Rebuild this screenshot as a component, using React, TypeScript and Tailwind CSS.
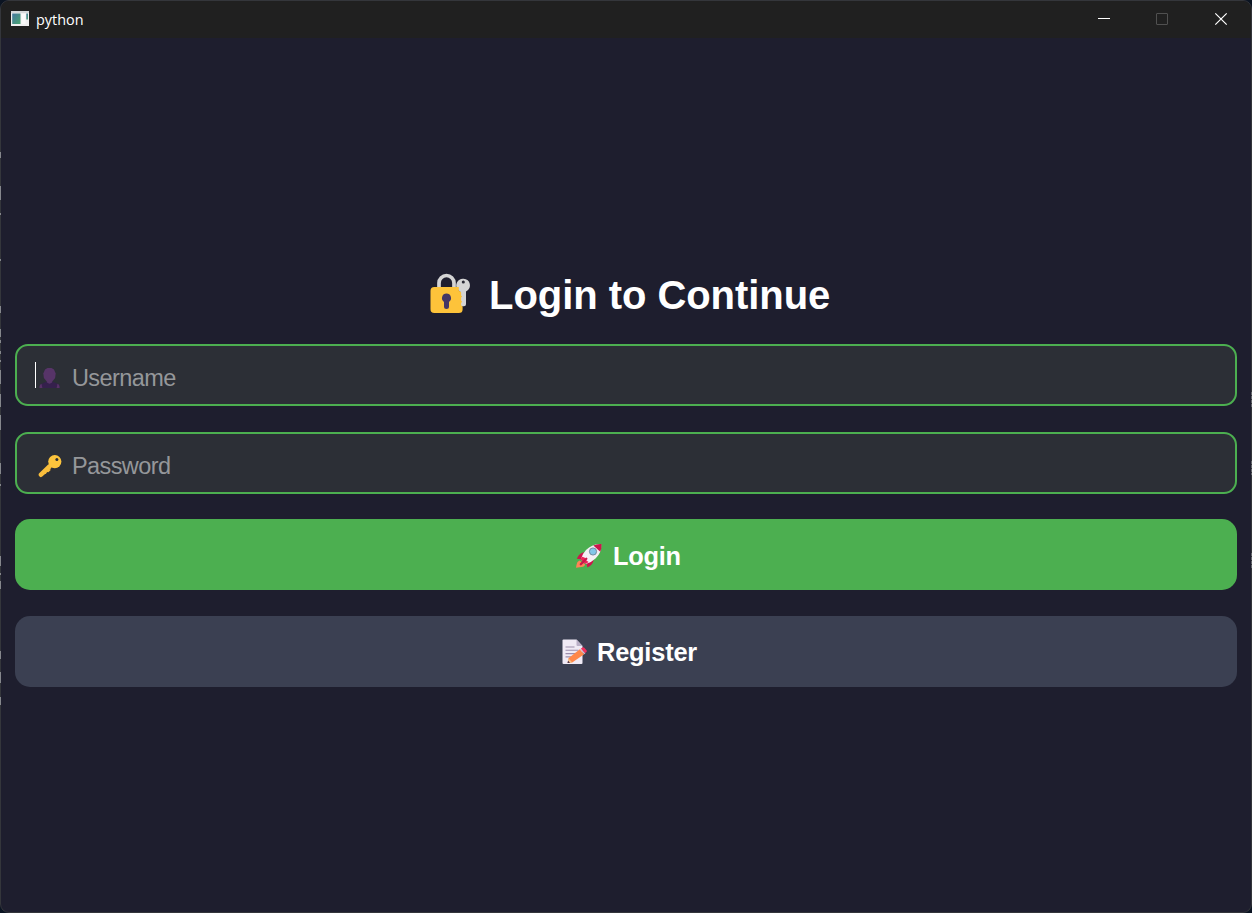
import React from "react";

function AppIcon() {
  return (
    <svg className="block h-[15px] w-[18px]" viewBox="0 0 18 15">
      <defs>
        <linearGradient id="pane" x1="0" y1="0" x2="1" y2="1">
          <stop offset="0" stopColor="#4577a0" />
          <stop offset="1" stopColor="#4ba671" />
        </linearGradient>
      </defs>
      <rect width="18" height="15" fill="#f0f0f0" />
      <rect width="18" height="2" fill="#d5d8da" />
      <rect x="1.200" y="2.500" width="8.300" height="10.500" fill="url(#pane)" />
      <rect x="10.500" y="3" width="4" height="10" fill="#fafafa" />
      <rect x="15.300" y="2.500" width="1.700" height="6" fill="url(#pane)" />
    </svg>
  );
}

function LockIcon() {
  return (
    <svg className="block h-[42px] w-[42px]" viewBox="0 0 42 42">
      <path d="M9 15V10a7.500 7.500 0 0 1 15 0V15" fill="none" stroke="#d4d4d4" strokeWidth="3.700" />
      <path d="M33.500 5.700a6.700 6.700 0 0 0-5.800 10.800q1.300 1.500 2.500 2V32q0 1.300 1.500 1.300H34q2 0 2-2V18.500A6.700 6.700 0 0 0 33.500 5.700Z" fill="#d5d5d5" />
      <path d="M4.300 14h24.500v3.500l2.300 1.800v3.200l1 1-1 1v3l1 1.200-1 1.200v2.300l1.500 1.200v3.200q0 3.500-3.800 3.500H4.300q-3.800 0-3.800-3.800V17.800Q.5 14 4.300 14Z" fill="#fdc33a" />
      <circle cx="33.300" cy="9" r="1.550" fill="#2b2b36" />
      <path d="M16.500 20.500a4.600 4.600 0 0 0-2.500 8.400v4.500a2.500 2.500 0 0 0 5 0v-4.500a4.600 4.600 0 0 0-2.500-8.400Z" fill="#443765" />
    </svg>
  );
}

function UserIcon() {
  return (
    <svg className="block h-[22px] w-[22px]" viewBox="0 0 22 22">
      <path d="M1 21v-1.500q.3-2.500 2.500-3l4.500-2h5l5 2q2.500.5 3 3V21Z" fill="#35204c" />
      <path d="M.5 21v-1.500q.2-2 2-2.800L3.400 21ZM20.500 21v-1.500q-.2-2-2-2.800L17.600 21Z" fill="#573166" />
      <path d="M8 12h5v3.500q-2.500 2.300-5 0Z" fill="#573468" />
      <path d="M6 2.500 8.500 1h4L15 2.500l1.700 4-.6 4.500-2.800 3.500-2.800 1.800-2.800-1.800L4.900 11l-.6-4.500Z" fill="#573468" />
    </svg>
  );
}

function KeyIcon() {
  return (
    <svg className="block h-[24px] w-[24px]" viewBox="0 0 24 24">
      <path d="M11.500 12.500 3 20.700" stroke="#f9be3c" strokeWidth="4.600" strokeLinecap="round" />
      <path d="m9.500 14.500 3.500 1.300-2.600 2.400-1.700-.2-.6 1.700-2 .6Z" fill="#f9be3c" />
      <circle cx="16.800" cy="7.600" r="6.600" fill="#fcc43d" />
      <circle cx="18.900" cy="5.400" r="1.500" fill="#2d3036" />
    </svg>
  );
}

function RocketIcon() {
  return (
    <svg className="block h-[26px] w-[28px]" viewBox="0 0 28 26">
      <path d="m4.500 17.500 5.500 3.700q-.2 2.600-3.600 2.900L1 24.700l.6-3.300q.3-2.600 2.900-3.900Z" fill="#ff8356" />
      <path d="M9.500 9.200q-5 .1-7.700 6.500L9 16.500ZM18.500 17q-.2 4.800-6.100 7.600l-1.500-6.500Z" fill="#cb164c" />
      <path d="M26.200 1.300Q18 .2 11 7q-3.900 4-5.200 9.500l5 4.500q6-1.700 10-5.700 6.200-6.300 5.400-14Z" fill="#f4eff5" />
      <path d="M18.300 2.500Q22 .7 26.500 1q.5 4-1.200 7.800Z" fill="#cb164c" />
      <path d="M7 13.800q3.200.4 3.700 2.400.5 1.700 3 2.800L10.500 21l-5-4.500Z" fill="#ef2358" />
      <circle cx="18" cy="8.500" r="3.600" fill="#83c6e9" stroke="#64788d" strokeWidth=".8" />
      <path d="m11.300 15.700-5.500 5.500" stroke="#cb164c" strokeWidth="2.300" strokeLinecap="round" />
    </svg>
  );
}

function MemoIcon() {
  return (
    <svg className="block h-[26px] w-[26px]" viewBox="0 0 26 26">
      <path d="M2.500.5H15.500L21.500 7v17q0 1-1 1h-18q-1 0-1-1V1.500q0-1 1-1Z" fill="#f0eaf5" />
      <path d="M15.500.5 21.500 7h-5q-1 0-1-1Z" fill="#bbb0c8" />
      <path d="M4.500 8h9M4.500 11.300h13M4.500 14.600h11M4.500 17.900h6" stroke="#9c8dac" strokeWidth="1.100" />
      <path d="m18.800 10.300 4.400 4.900-12 8.400-4.500.3.800-4.600Z" fill="#ff8749" />
      <path d="m18.800 10.300 1.200-.9 4.400 4.900-1.200.9Z" fill="#d8bdd0" />
      <path d="m19.900 9.400 1.600-1q1-.5 1.800.4l2.200 2.500q.7 1-.2 1.800l-1.200 1Z" fill="#f3305f" />
      <path d="m7.500 19.300 3.700 4.300-4.500.3Z" fill="#f7c58b" />
      <path d="m7.100 21.700 1.900 2-2.500.2Z" fill="#3c2546" />
    </svg>
  );
}

function TitleBar() {
  return (
    <header className="flex h-[37px] shrink-0 items-center bg-[#202020] pb-[2px] pl-[10px]">
      <AppIcon />
      <span className="ml-[7px] pt-[2px] font-['Open_Sans',sans-serif] text-[14.400px] leading-[20px] text-white">python</span>
      <div className="ml-auto flex h-full">
        <button aria-label="Minimize" className="flex h-full w-[58px] items-center justify-center">
          <svg className="h-[14px] w-[14px]" viewBox="0 0 14 14"><path d="M1 6.500h12" stroke="#fff" /></svg>
        </button>
        <button aria-label="Maximize" className="flex h-full w-[58px] items-center justify-center">
          <svg className="h-[14px] w-[14px]" viewBox="0 0 14 14"><rect x="1.500" y="1.500" width="11" height="11" rx=".5" fill="none" stroke="#505050" /></svg>
        </button>
        <button aria-label="Close" className="flex h-full w-[60px] items-center justify-center">
          <svg className="h-[14px] w-[14px]" viewBox="0 0 14 14"><path d="m1.300 1.300 11.400 11.400m0-11.400L1.300 12.700" stroke="#fff" strokeWidth="1.200" /></svg>
        </button>
      </div>
    </header>
  );
}

function Field({ icon, label, focused = false }: { icon: React.ReactNode; label: string; focused?: boolean }) {
  return (
    <div className="flex h-[62px] items-center rounded-[13px] border-2 border-[#4caf50] bg-[#2c2f36] pl-[18px]">
      <span className={focused ? "h-[26px] w-px bg-white" : "h-[26px] w-px"} />
      <span className="ml-[2px] flex w-[24px] justify-center pt-[5px]">{icon}</span>
      <span className="ml-[10px] pt-[5px] text-[23.500px] leading-[28px] tracking-[-0.600px] text-[#95979a]">{label}</span>
    </div>
  );
}

function FrameGlints() {
  return (
    <svg className="pointer-events-none absolute inset-0 h-[913px] w-[1252px]" viewBox="0 0 1252 913">
      <path
        d="M.5 152v6M.5 186v14M.5 213v2M.5 259v2M.5 306v7M.5 329v8M.5 340v3M.5 351v3M.5 360v2M.5 370v14M.5 394v13M.5 415v15M.5 463v11M.5 484v2M.5 556v10M.5 573v2M.5 581v8M.5 651v8M.5 672v11M.5 697v8"
        stroke="#85878c"
      />
      <path d="M1251.500 392v15M1251.500 461v14M1251.500 553v15" stroke="#66686d" strokeDasharray="3 1" />
    </svg>
  );
}

export default function App() {
  return (
    <div className="relative h-[913px] w-[1252px] overflow-hidden bg-[#0b1422] font-['Liberation_Sans',Arial,sans-serif]">
      <div className="flex h-full flex-col overflow-hidden rounded-[9px] border border-[#34363b] bg-[#1e1e2e]">
        <TitleBar />
        <main className="flex flex-col px-[14px] pt-[230px]">
          <h1 className="flex h-[54px] items-center pl-[415px] text-[40px] leading-[54px] font-bold text-white">
            <span className="-mt-[2px]"><LockIcon /></span>
            <span className="ml-[17px] tracking-[-0.050px] whitespace-nowrap">Login to Continue</span>
          </h1>
          <div className="mt-[22px] flex flex-col gap-[26px]">
            <Field icon={<UserIcon />} label="Username" focused />
            <Field icon={<KeyIcon />} label="Password" />
            <button className="-mt-px flex h-[71px] items-center rounded-[15px] bg-[#4caf50] pt-[2px] pl-[560px] text-[25.400px] font-bold text-white">
              <RocketIcon />
              <span className="ml-[10px] pt-[2px] tracking-[-0.250px]">Login</span>
            </button>
            <button className="flex h-[71px] items-center rounded-[15px] bg-[#3b4052] pt-px pl-[546px] text-[25.400px] font-bold text-white">
              <MemoIcon />
              <span className="ml-[10px] tracking-[-0.200px]">Register</span>
            </button>
          </div>
        </main>
      </div>
      <FrameGlints />
    </div>
  );
}
